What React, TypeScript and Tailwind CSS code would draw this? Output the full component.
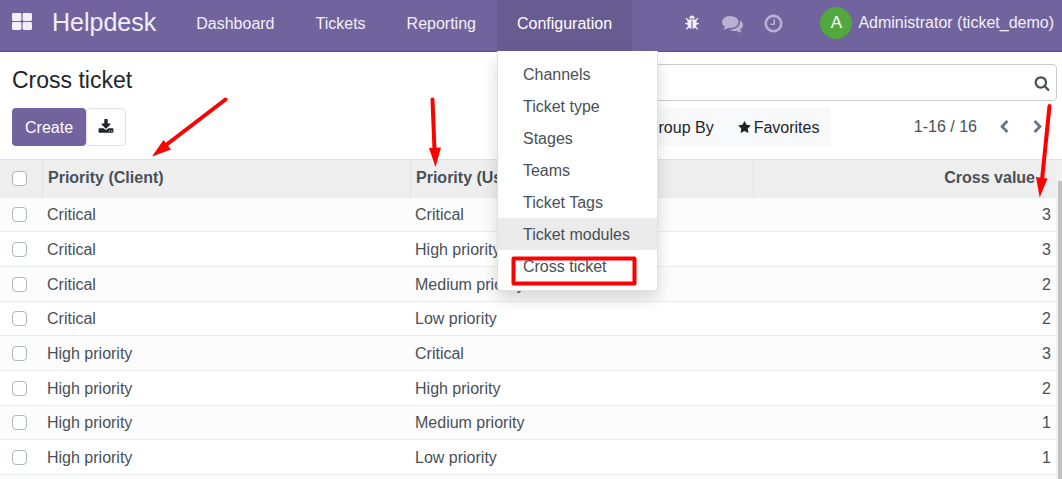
import React from "react";

const ICONS = {
  bug: "M1696 960q0 26-19 45t-45 19h-224q0 171-67 290l208 209q19 19 19 45t-19 45q-18 19-45 19t-45-19l-198-197q-5 5-15 13t-42 28.5-65 36.5-82 29-97 13v-896h-128v896q-51 0-101.5-13.5t-87-33-66-39-43.5-32.5l-15-14-183 207q-20 21-48 21-24 0-43-16-19-18-20.5-44.5t15.5-46.5l202-227q-58-114-58-274h-224q-26 0-45-19t-19-45 19-45 45-19h224v-294l-173-173q-19-19-19-45t19-45 45-19 45 19l173 173h844l173-173q19-19 45-19t45 19 19 45-19 45l-173 173v294h224q26 0 45 19t19 45zm-480-576h-640q0-133 93.5-226.5t226.5-93.5 226.5 93.5 93.5 226.5z",
  comments:
    "M1408 768q0 139-94 257t-256.5 186.5-353.5 68.5q-86 0-176-16-124 88-278 128-36 9-86 16h-3q-11 0-20.5-8t-11.5-21q-1-3-1-6.5t.5-6.5 2-6l2.5-5 3.5-5.5 4-5 4.5-5 4-4.5q5-6 23-25t26-29.5 22.5-29 25-38.5 20.5-44q-124-72-195-177t-71-224q0-139 94-257t256.5-186.5 353.5-68.5 353.5 68.5 256.5 186.5 94 257zm384 256q0 120-71 224.5t-195 176.5q10 24 20.5 44t25 38.5 22.5 29 26 29.5 23 25q1 1 4 4.5t4.5 5 4 5 3.5 5.5l2.5 5 2 6 .5 6.5-1 6.5q-3 14-13 22t-22 7q-50-7-86-16-154-40-278-128-90 16-176 16-271 0-472-132 58 4 88 4 161 0 309-45t264-129q125-92 192-212t67-254q0-77-23-152 129 71 204 178t75 230z",
  clock:
    "M1024 544v448q0 14-9 23t-23 9h-320q-14 0-23-9t-9-23v-64q0-14 9-23t23-9h224v-352q0-14 9-23t23-9h64q14 0 23 9t9 23zm416 352q0-148-73-273t-198-198-273-73-273 73-198 198-73 273 73 273 198 198 273 73 273-73 198-198 73-273zm224 0q0 209-103 385.5t-279.5 279.5-385.5 103-385.5-103-279.5-279.5-103-385.5 103-385.5 279.5-279.5 385.5-103 385.5 103 279.5 279.5 103 385.5z",
  search:
    "M1216 832q0-185-131.5-316.5t-316.5-131.5-316.5 131.5-131.5 316.5 131.5 316.5 316.5 131.5 316.5-131.5 131.5-316.5zm512 832q0 52-38 90t-90 38q-54 0-90-38l-343-342q-179 124-399 124-143 0-273.5-55.5t-225-150-150-225-55.5-273.5 55.5-273.5 150-225 225-150 273.5-55.5 273.5 55.5 225 150 150 225 55.5 273.5q0 220-124 399l343 343q37 37 37 90z",
  star: "M1728 647q0 22-26 48l-363 354 86 500q1 7 1 20 0 21-10.5 35.5t-30.5 14.5q-19 0-40-12l-449-236-449 236q-22 12-40 12-21 0-31.5-14.5t-10.5-35.5q0-6 2-20l86-500-364-354q-25-27-25-48 0-37 56-46l502-73 225-455q19-41 49-41t49 41l225 455 502 73q56 9 56 46z",
  left: "M1427 301l-531 531 531 531q19 19 19 45t-19 45l-166 166q-19 19-45 19t-45-19l-742-742q-19-19-19-45t19-45l742-742q19-19 45-19t45 19l166 166q19 19 19 45t-19 45z",
  right:
    "M1363 877l-742 742q-19 19-45 19t-45-19l-166-166q-19-19-19-45t19-45l531-531-531-531q-19-19-19-45t19-45l166-166q19-19 45-19t45 19l742 742q19 19 19 45t-19 45z",
  download:
    "M1344 1344q0-26-19-45t-45-19-45 19-19 45 19 45 45 19 45-19 19-45zm256 0q0-26-19-45t-45-19-45 19-19 45 19 45 45 19 45-19 19-45zm128-224v320q0 40-28 68t-68 28h-1472q-40 0-68-28t-28-68v-320q0-40 28-68t68-28h465l135 136q58 56 136 56t136-56l136-136h464q40 0 68 28t28 68zm-325-569q17 41-14 70l-448 448q-18 19-45 19t-45-19l-448-448q-31-29-14-70 17-39 59-39h256v-448q0-26 19-45t45-19h256q26 0 45 19t19 45v448h256q42 0 59 39z",
  filter:
    "M1595 295q17 41-14 70l-493 493v742q0 42-39 59-13 5-25 5-27 0-45-19l-256-256q-19-19-19-45v-486l-493-493q-31-29-14-70 17-39 59-39h1280q42 0 59 39z",
  bars: "M1664 1344v128q0 26-19 45t-45 19h-1408q-26 0-45-19t-19-45v-128q0-26 19-45t45-19h1408q26 0 45 19t19 45zm0-512v128q0 26-19 45t-45 19h-1408q-26 0-45-19t-19-45v-128q0-26 19-45t45-19h1408q26 0 45 19t19 45zm0-512v128q0 26-19 45t-45 19h-1408q-26 0-45-19t-19-45v-128q0-26 19-45t45-19h1408q26 0 45 19t19 45z",
};

function Icon({ name, className }: { name: keyof typeof ICONS; className: string }) {
  return (
    <svg viewBox="0 0 1792 1792" fill="currentColor" aria-hidden="true" className={`shrink-0 ${className}`}>
      <path d={ICONS[name]} />
    </svg>
  );
}

const MENU = ["Channels", "Ticket type", "Stages", "Teams", "Ticket Tags", "Ticket modules", "Cross ticket"];

const ROWS = [
  { client: "Critical", user: "Critical", value: 3 },
  { client: "Critical", user: "High priority", value: 3 },
  { client: "Critical", user: "Medium priority", value: 2 },
  { client: "Critical", user: "Low priority", value: 2 },
  { client: "High priority", user: "Critical", value: 3 },
  { client: "High priority", user: "High priority", value: 2 },
  { client: "High priority", user: "Medium priority", value: 1 },
  { client: "High priority", user: "Low priority", value: 1 },
];

function Check({ label }: { label: string }) {
  return (
    <input
      type="checkbox"
      aria-label={label}
      className="block size-[15px] appearance-none rounded-[4px] border border-[#adb5bd] bg-white checked:bg-[#71639e]"
    />
  );
}

function ConfigurationMenu() {
  return (
    <div className="absolute left-0 top-full z-20 w-[161px] rounded-b border border-t-0 border-[#dee2e6] bg-white pb-2 pt-[7px] shadow-[0_8px_16px_rgba(0,0,0,0.15)]">
      {MENU.map((item) => (
        <a
          key={item}
          href="#"
          className={`block h-8 whitespace-nowrap pl-[25px] pt-px leading-8 text-[#495057] ${
            item === "Ticket modules" ? "bg-[#ebebeb]" : ""
          }`}
        >
          {item}
        </a>
      ))}
    </div>
  );
}

function Navbar() {
  const link = "flex items-center px-5 pb-1 text-white/90";
  return (
    <header className="flex h-[52px] shrink-0 border-b border-[#5a4f7f] bg-[#71639e]">
      <button type="button" aria-label="Apps" className="flex items-center pb-2 pl-3 text-white/90">
        <svg viewBox="0 0 20 17" fill="currentColor" className="h-[17px] w-5">
          <rect x="0" y="0" width="9.4" height="8" rx="1.4" />
          <rect x="10.6" y="0" width="9.4" height="8" rx="1.4" />
          <rect x="0" y="9" width="9.4" height="8" rx="1.4" />
          <rect x="10.6" y="9" width="9.4" height="8" rx="1.4" />
        </svg>
      </button>
      <a href="#" className="flex items-center pb-[6px] pl-5 text-[25px] text-white/90">
        Helpdesk
      </a>
      <nav className="flex gap-px pl-5">
        <a href="#" className={link}>
          Dashboard
        </a>
        <a href="#" className={link}>
          Tickets
        </a>
        <a href="#" className={link}>
          Reporting
        </a>
        <div className="relative flex">
          <button type="button" aria-expanded="true" className="flex items-center bg-[#685b91] px-5 pb-1 text-white">
            Configuration
          </button>
          <ConfigurationMenu />
        </div>
      </nav>
      <div className="ml-auto flex items-center pb-[5px] pr-2">
        <button type="button" aria-label="Debug" className="text-white/90">
          <Icon name="bug" className="size-4" />
        </button>
        <button type="button" aria-label="Conversations" className="ml-[22px] text-white/50">
          <Icon name="comments" className="size-[21px]" />
        </button>
        <button type="button" aria-label="Activities" className="ml-5 text-white/50">
          <Icon name="clock" className="size-[21px]" />
        </button>
        <button type="button" className="ml-9 flex items-center gap-[6px] whitespace-nowrap text-white/90">
          <span className="flex size-8 items-center justify-center rounded-full bg-[#52a83f] text-[17px] text-white">
            A
          </span>
          Administrator (ticket_demo)
        </button>
      </div>
    </header>
  );
}

function ControlPanel() {
  const option = "flex items-center gap-[3px] px-3 pt-px";
  return (
    <section className="grid shrink-0 grid-cols-2 gap-y-[7px] border-b border-[#dee2e6] bg-white pb-[13px] pl-3 pr-[5px] pt-3">
      <h1 className="pt-[2px] text-[23px] leading-7 text-[#212529]">Cross ticket</h1>
      <label className="flex h-[37px] items-center rounded border border-[#ccc] pr-[6px] text-[#495057]">
        <input type="search" aria-label="Search" className="min-w-0 flex-1 px-2 outline-none" />
        <Icon name="search" className="size-4" />
      </label>
      <div className="flex h-[38px]">
        <button type="button" className="rounded bg-[#71639e] px-[13px] pt-px text-white">
          Create
        </button>
        <button
          type="button"
          aria-label="Export all"
          className="flex w-10 items-center justify-center rounded border border-[#dee2e6] text-[#212529]"
        >
          <Icon name="download" className="size-4" />
        </button>
      </div>
      <div className="flex h-[38px] items-center justify-between">
        <div className="flex h-full rounded bg-[#f8f9fa] text-[#212529]">
          <button type="button" className={option}>
            <Icon name="filter" className="size-[13px]" />
            Filters
          </button>
          <button type="button" className={option}>
            <Icon name="bars" className="size-[13px]" />
            Group By
          </button>
          <button type="button" className={option}>
            <Icon name="star" className="size-[13px]" />
            Favorites
          </button>
        </div>
        <div className="flex items-center pr-3 text-[#6c757d]">
          <span className="text-[#495057]">1-16 / 16</span>
          <button type="button" aria-label="Previous" className="ml-5">
            <Icon name="left" className="size-[14px]" />
          </button>
          <button type="button" aria-label="Next" className="ml-5">
            <Icon name="right" className="size-[14px]" />
          </button>
        </div>
      </div>
    </section>
  );
}

function TicketTable() {
  const head = "border-l border-[#dee2e6] pl-[5px] text-left font-bold";
  return (
    <div className="flex min-h-0 flex-1">
      <div className="flex min-w-0 flex-1 flex-col bg-[#fcfcfc]">
        <table className="w-full table-fixed border-separate border-spacing-0 text-[#495057]">
          <thead>
            <tr className="h-[38px] bg-[#eee] [&>th]:border-b-2 [&>th]:border-b-[#e9ecef]">
              <th className="w-[42px] pl-3">
                <Check label="Select all" />
              </th>
              <th className={`w-[34.85%] ${head}`}>Priority (Client)</th>
              <th className={`w-[32.5%] ${head}`}>Priority (User)</th>
              <th className="border-l border-[#dee2e6] pr-[21px] text-right font-bold">Cross value</th>
            </tr>
          </thead>
          <tbody>
            {ROWS.map((row, i) => (
              <tr
                key={i}
                className="h-[35px] odd:bg-[#fcfcfc] even:bg-white nth-[3n+1]:h-[34px] [&>td]:border-b [&>td]:border-[#e9ecef]"
              >
                <td className="pl-3">
                  <Check label={`Select ${row.client} / ${row.user}`} />
                </td>
                <td className="pl-[5px] pt-px">{row.client}</td>
                <td className="pl-[5px] pt-px">{row.user}</td>
                <td className="pr-[5px] pt-px text-right">{row.value}</td>
              </tr>
            ))}
          </tbody>
        </table>
      </div>
      <div className="flex w-[6px] bg-[#f1f1f1] pl-[2px] pt-[21px]">
        <div className="flex-1 bg-[#c1c1c1]" />
      </div>
    </div>
  );
}

function Annotations() {
  return (
    <svg
      width="1062"
      height="479"
      viewBox="0 0 1062 479"
      aria-hidden="true"
      className="pointer-events-none absolute left-0 top-0 z-30"
    >
      <g stroke="#f00" strokeWidth="4" strokeLinecap="round" fill="none">
        <path d="M225.500 99.500L166 145" />
        <path d="M432.500 99.500L434.500 150" />
        <path d="M1049.500 106L1042 180" />
        <rect x="513.500" y="258.500" width="121" height="25" strokeLinejoin="round" />
      </g>
      <g fill="#f00">
        <path d="M152 156.500L163.500 140L171 149.500Z" />
        <path d="M435.500 167L429 148L441 147.500Z" />
        <path d="M1039.700 197.500L1036 177L1047.500 178.500Z" />
      </g>
    </svg>
  );
}

export default function App() {
  return (
    <div className="relative flex min-h-screen flex-col overflow-hidden bg-white font-['Liberation_Sans',Arial,sans-serif] text-base">
      <Navbar />
      <ControlPanel />
      <TicketTable />
      <Annotations />
    </div>
  );
}
